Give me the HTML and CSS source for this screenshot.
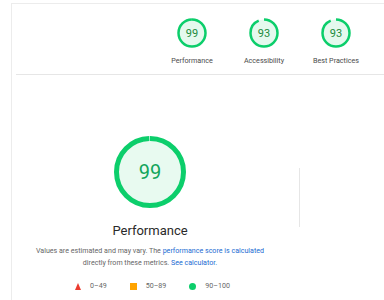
FILE: index.html
```html
<!DOCTYPE html>
<html lang="en">
<head>
<meta charset="utf-8">
<title>Lighthouse Report</title>
<link rel="stylesheet" href="styles.css">
</head>
<body>
<div class="report">
  <header class="scores">
    <div class="score">
      <div class="gauge sm">
        <svg viewBox="0 0 30 30" width="30" height="30"><circle class="base" cx="15" cy="15" r="13.5"/><circle class="arc" cx="15" cy="15" r="13.5" stroke-dasharray="84.2 84.82" transform="rotate(-90 15 15)"/></svg>
        <span class="num">99</span>
      </div>
      <div class="label">Performance</div>
    </div>
    <div class="score">
      <div class="gauge sm">
        <svg viewBox="0 0 30 30" width="30" height="30"><circle class="base" cx="15" cy="15" r="13.5"/><circle class="arc" cx="15" cy="15" r="13.5" stroke-dasharray="78.88 84.82" transform="rotate(-90 15 15)"/></svg>
        <span class="num">93</span>
      </div>
      <div class="label">Accessibility</div>
    </div>
    <div class="score">
      <div class="gauge sm">
        <svg viewBox="0 0 30 30" width="30" height="30"><circle class="base" cx="15" cy="15" r="13.5"/><circle class="arc" cx="15" cy="15" r="13.5" stroke-dasharray="78.88 84.82" transform="rotate(-90 15 15)"/></svg>
        <span class="num">93</span>
      </div>
      <div class="label">Best Practices</div>
    </div>
  </header>
  <main class="main">
    <section class="summary">
      <div class="gauge lg">
        <svg viewBox="0 0 72 72" width="72" height="72"><circle class="base" cx="36" cy="36" r="33.5"/><circle class="arc" cx="36" cy="36" r="33.5" stroke-dasharray="209.5 210.49" transform="rotate(-90 36 36)"/></svg>
        <span class="num">99</span>
      </div>
      <h1 class="title">Performance</h1>
      <p class="desc">Values are estimated and may vary. The <a href="#">performance score is calculated</a><br>directly from these metrics. <a href="#">See calculator.</a></p>
      <ul class="legend">
        <li class="item"><span class="ico tri"></span>0–49</li>
        <li class="item"><span class="ico sq"></span>50–89</li>
        <li class="item"><span class="ico dot"></span>90–100</li>
      </ul>
    </section>
    <div class="vdiv"></div>
  </main>
</div>
</body>
</html>
```
FILE: styles.css
```css
* { box-sizing: border-box; }
html, body { margin: 0; padding: 0; background: #fff; }
body { font-family: Roboto, "Liberation Sans", Arial, sans-serif; color: #212121; width: 384px; height: 300px; overflow: hidden; }

.report {
  margin: 3px 0 0 11px;
  border-top: 1px solid #ececec;
  border-left: 1px solid #ececec;
  height: 297px;
}

.scores {
  display: flex;
  justify-content: flex-end;
  padding: 14px 12px 0 0;
  margin-left: 4px;
  height: 71px;
  border-bottom: 1px solid #e6e6e6;
}
.score { width: 72px; display: flex; flex-direction: column; align-items: center; }
.label { margin-top: 8px; font-size: 7.2px; line-height: 9px; color: #4a4a4a; white-space: nowrap; }

.gauge { display: grid; place-items: center; }
.gauge > * { grid-area: 1 / 1; }
.gauge svg { display: block; }
.gauge .base { fill: #e5f9ee; stroke: none; }
.gauge .arc { fill: none; stroke: #0cce6b; stroke-width: 2.5; }
.gauge.lg .arc { stroke-width: 5; }
.gauge.lg .base { fill: #e8faf0; }
.gauge .num { color: #1b8a3c; font-size: 11px; line-height: 1; }
.gauge.lg .num { color: #12a55c; font-size: 20px; }

.main { display: flex; }
.summary {
  width: 276px;
  padding-top: 61px;
  display: flex;
  flex-direction: column;
  align-items: center;
}
.title { margin: 15px 0 0; font-size: 13px; line-height: 15px; font-weight: 400; color: #2a2a2a; }
.desc { margin: 7px 0 0; font-size: 7.1px; line-height: 12px; color: #666; text-align: center; }
.desc a { color: #1a6bd2; text-decoration: none; }

.legend { list-style: none; margin: 11px 0 0; padding: 0; display: flex; gap: 23px; font-size: 7.1px; line-height: 12px; color: #666; padding-left: 5px; }
.item { display: flex; align-items: center; gap: 9px; }
.ico { display: block; width: 7px; height: 7px; }
.tri { width: 0; height: 0; border-left: 3.5px solid transparent; border-right: 3.5px solid transparent; border-bottom: 7px solid #eb3b2f; }
.sq { background: #ffa400; }
.dot { background: #0cce6b; border-radius: 50%; }

.vdiv { width: 1px; height: 59px; margin: 93px 0 0 11px; background: #e6e6e6; }
```
